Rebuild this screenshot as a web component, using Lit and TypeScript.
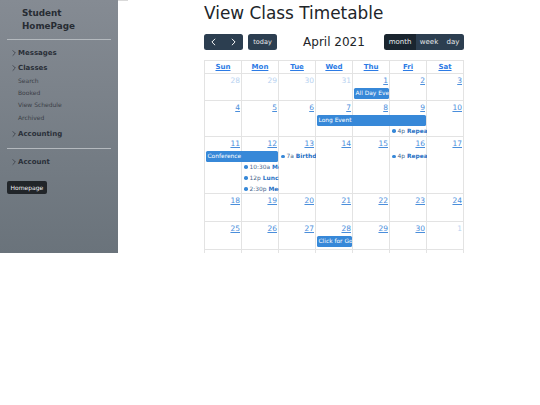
import { LitElement, html, css } from "lit";
import { customElement } from "lit/decorators.js";

type Ev = { col: number; span?: number; row: number; label?: string; time?: string; title?: string };
type Week = { h: number; days: [string, boolean][]; events: Ev[] };

const d = (start: number, n = 7): [string, boolean][] =>
  Array.from({ length: n }, (_, i) => [String(start + i), false] as [string, boolean]);

const weeks: Week[] = [
  {
    h: 27,
    days: [["28", true], ["29", true], ["30", true], ["31", true], ["1", false], ["2", false], ["3", false]],
    events: [{ col: 5, row: 2, label: "All Day Event" }],
  },
  {
    h: 36,
    days: d(4),
    events: [
      { col: 4, span: 3, row: 2, label: "Long Event" },
      { col: 6, row: 3, time: "4p", title: "Repeating Event" },
    ],
  },
  {
    h: 57,
    days: d(11),
    events: [
      { col: 1, span: 2, row: 2, label: "Conference" },
      { col: 3, row: 2, time: "7a", title: "Birthday Party" },
      { col: 6, row: 2, time: "4p", title: "Repeating Event" },
      { col: 2, row: 3, time: "10:30a", title: "Meeting" },
      { col: 2, row: 4, time: "12p", title: "Lunch" },
      { col: 2, row: 5, time: "2:30p", title: "Meeting" },
    ],
  },
  { h: 28, days: d(18), events: [] },
  {
    h: 28,
    days: [["25", false], ["26", false], ["27", false], ["28", false], ["29", false], ["30", false], ["1", true]],
    events: [{ col: 4, row: 2, label: "Click for Google" }],
  },
  { h: 28, days: [], events: [] },
];

const chevron = html`<svg class="chev" viewBox="0 0 6 10"><path d="M1 1l4 4-4 4"></path></svg>`;

@customElement("app-root")
export class AppRoot extends LitElement {
  static styles = css`
    :host {
      display: block;
      height: 405px;
      overflow: hidden;
      background: #fff;
      font-family: "DejaVu Sans", sans-serif;
      color: #212529;
    }
    .page {
      display: flex;
      align-items: flex-start;
      height: 253px;
      overflow: hidden;
    }
    .side {
      width: 118px;
      height: 253px;
      flex: none;
      box-sizing: border-box;
      padding: 7px 7px 0;
      background: linear-gradient(180deg, #858b93 0%, #6a737b 100%);
    }
    .brand {
      margin: 0 0 0 15px;
      font-size: 8.8px;
      font-weight: 700;
      line-height: 13px;
      color: #272c33;
    }
    .rule {
      height: 1px;
      background: #b4b9be;
    }
    .brand + .rule { margin-top: 6px; }
    .gap-a { height: 5px; }
    .gap-b { height: 3px; }
    .gap-c { height: 6px; }
    .gap-d { height: 6px; }
    .nav {
      display: flex;
      align-items: center;
      gap: 2px;
      height: 15px;
      padding-left: 5px;
      font-size: 7px;
      font-weight: 700;
      color: #2a2f38;
    }
    .chev {
      width: 4px;
      height: 8px;
      fill: none;
      stroke: #2a2f38;
      stroke-width: 1;
    }
    .sub {
      margin-left: 11px;
      font-size: 6px;
      line-height: 12.2px;
      color: #3b4047;
    }
    .home {
      display: inline-block;
      margin-top: 11px;
      padding: 0 3.5px;
      height: 13px;
      line-height: 13px;
      border-radius: 2px;
      background: #212529;
      color: #f1f2f3;
      font-size: 6px;
    }
    .topmark {
      width: 10px;
      height: 1px;
      flex: none;
      background: #d9d9d9;
    }
    .main {
      width: 260px;
      margin-left: 76px;
      flex: none;
    }
    h1 {
      margin: 3px 0 0;
      font-size: 16.9px;
      line-height: 21px;
      font-weight: 400;
    }
    .toolbar {
      display: grid;
      grid-template-columns: 1fr auto 1fr;
      align-items: center;
      margin-top: 9.5px;
      height: 17px;
    }
    .left { display: flex; gap: 5px; }
    .right { display: flex; justify-content: flex-end; }
    .title { font-size: 12px; color: #212529; }
    .btns { display: flex; border-radius: 2.5px; overflow: hidden; }
    .btn {
      display: flex;
      align-items: center;
      justify-content: center;
      height: 16px;
      background: #2c3e50;
      color: #e6e9eb;
      font-size: 7px;
    }
    .today { width: 29px; border-radius: 2.5px; font-size: 6.5px; }
    .arrow { width: 19.5px; }
    .arrow svg { width: 5px; height: 8px; fill: none; stroke: #fff; stroke-width: 1.2; }
    .active { background: #1a252f; }
    .m { width: 32px; }
    .w { width: 26px; }
    .dd { width: 22px; }
    .cal {
      margin-top: 9.5px;
      border-left: 1px solid #e3e3e3;
      border-top: 1px solid #e3e3e3;
      font-size: 7px;
    }
    .head, .week {
      display: grid;
      grid-template-columns: repeat(7, 1fr);
    }
    .head div {
      height: 12px;
      line-height: 12px;
      text-align: center;
      font-weight: 700;
      font-size: 7px;
      color: #2c7be5;
      text-decoration: underline;
      border-right: 1px solid #e3e3e3;
      border-bottom: 1px solid #e3e3e3;
    }
    .week {
      grid-template-rows: 14px repeat(4, 10.8px);
      align-content: start;
      overflow: hidden;
      border-bottom: 1px solid #e3e3e3;
      box-sizing: border-box;
    }
    .cell {
      grid-row: 1 / 6;
      border-right: 1px solid #e3e3e3;
      min-width: 0;
    }
    .num {
      grid-row: 1;
      text-align: right;
      padding: 2px 2px 0 0;
      font-size: 7.5px;
      line-height: 10px;
      color: #4a8edb;
      text-decoration: underline;
      z-index: 1;
    }
    .num.off { opacity: 0.4; text-decoration: none; }
    .bar {
      z-index: 1;
      align-self: center;
      height: 10.5px;
      line-height: 10.5px;
      margin: 0 1px;
      padding-left: 1.5px;
      border-radius: 1.5px;
      background: #3788d8;
      color: #fff;
      font-size: 5.9px;
      white-space: nowrap;
      overflow: hidden;
      min-width: 0;
    }
    .dot {
      z-index: 1;
      display: flex;
      align-items: center;
      gap: 2px;
      padding-left: 2px;
      font-size: 5.9px;
      color: #47678c;
      white-space: nowrap;
      overflow: hidden;
      min-width: 0;
    }
    .dot i {
      flex: none;
      width: 3.5px;
      height: 3.5px;
      border-radius: 50%;
      background: #3788d8;
    }
    .dot b { color: #1f6fc4; }
  `;

  private event(e: Ev) {
    const pos = `grid-column:${e.col}/span ${e.span ?? 1};grid-row:${e.row}`;
    if (e.label) return html`<div class="bar" style=${pos}>${e.label}</div>`;
    return html`<div class="dot" style=${pos}><i></i><span>${e.time}</span><b>${e.title}</b></div>`;
  }

  render() {
    return html`
      <div class="page">
        <aside class="side">
          <div class="brand">Student<br />HomePage</div>
          <div class="rule"></div>
          <div class="gap-a"></div>
          <div class="nav">${chevron}Messages</div>
          <div class="nav">${chevron}Classes</div>
          <div class="sub">Search</div>
          <div class="sub">Booked</div>
          <div class="sub">View Schedule</div>
          <div class="sub">Archived</div>
          <div class="gap-b"></div>
          <div class="nav">${chevron}Accounting</div>
          <div class="gap-c"></div>
          <div class="rule"></div>
          <div class="gap-d"></div>
          <div class="nav">${chevron}Account</div>
          <div class="home">Homepage</div>
        </aside>
        <div class="topmark"></div>
        <main class="main">
          <h1>View Class Timetable</h1>
          <div class="toolbar">
            <div class="left">
              <div class="btns">
                <div class="btn arrow"><svg viewBox="0 0 6 10"><path d="M5 1L1 5l4 4"></path></svg></div>
                <div class="btn arrow"><svg viewBox="0 0 6 10"><path d="M1 1l4 4-4 4"></path></svg></div>
              </div>
              <div class="btn today">today</div>
            </div>
            <div class="title">April 2021</div>
            <div class="right">
              <div class="btns">
                <div class="btn m active">month</div>
                <div class="btn w">week</div>
                <div class="btn dd">day</div>
              </div>
            </div>
          </div>
          <div class="cal">
            <div class="head">
              ${["Sun", "Mon", "Tue", "Wed", "Thu", "Fri", "Sat"].map((n) => html`<div>${n}</div>`)}
            </div>
            ${weeks.map(
              (w) => html`
                <div class="week" style="height:${w.h}px">
                  ${Array.from({ length: 7 }, (_, i) => html`<div class="cell" style="grid-column:${i + 1}"></div>`)}
                  ${w.days.map(
                    ([n, off], i) => html`<div class="num ${off ? "off" : ""}" style="grid-column:${i + 1}">${n}</div>`
                  )}
                  ${w.events.map((e) => this.event(e))}
                </div>
              `
            )}
          </div>
        </main>
      </div>
    `;
  }
}
